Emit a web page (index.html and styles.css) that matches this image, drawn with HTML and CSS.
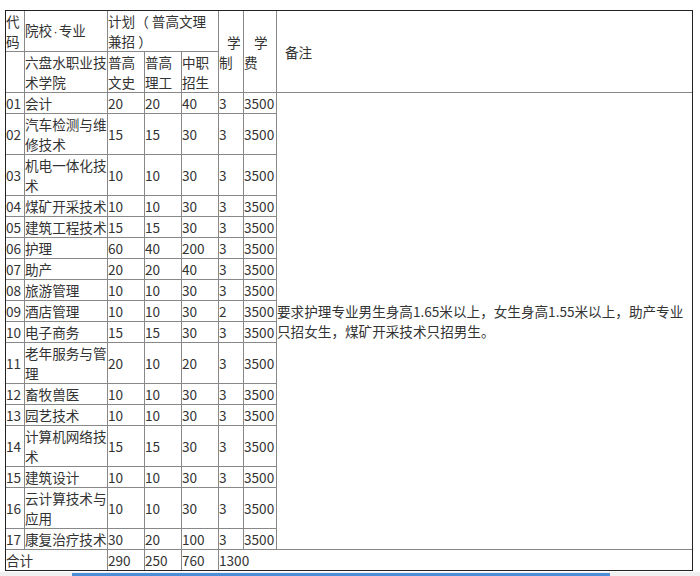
FILE: index.html
```html
<!DOCTYPE html>
<html lang="zh-CN">
<head>
<meta charset="utf-8">
<title>六盘水职业技术学院 招生计划</title>
<link rel="stylesheet" href="styles.css">
</head>
<body>
<div class="page">
<table class="plan">
  <colgroup>
    <col class="c-code"><col class="c-name"><col class="c-num"><col class="c-num"><col class="c-num"><col class="c-year"><col class="c-fee"><col class="c-note">
  </colgroup>
  <tr class="two">
    <td>代码</td>
    <td>院校<span class="dot">·</span>专业</td>
    <td colspan="3">计划（ 普高文理兼招 ）</td>
    <td rowspan="2" class="ind-year">学制</td>
    <td rowspan="2" class="ind-fee">学<br>费</td>
    <td rowspan="2" class="note-head last">备注</td>
  </tr>
  <tr class="two">
    <td></td>
    <td>六盘水职业技术学院</td>
    <td>普高文史</td>
    <td>普高理工</td>
    <td>中职招生</td>
  </tr>
  <tr><td>01</td><td>会计</td><td>20</td><td>20</td><td>40</td><td>3</td><td>3500</td>
    <td rowspan="17" class="note last">要求护理专业男生身高1.65米以上，女生身高1.55米以上，助产专业只招女生，煤矿开采技术只招男生。</td></tr>
  <tr><td>02</td><td>汽车检测与维修技术</td><td>15</td><td>15</td><td>30</td><td>3</td><td>3500</td></tr>
  <tr><td>03</td><td>机电一体化技术</td><td>10</td><td>10</td><td>30</td><td>3</td><td>3500</td></tr>
  <tr><td>04</td><td>煤矿开采技术</td><td>10</td><td>10</td><td>30</td><td>3</td><td>3500</td></tr>
  <tr><td>05</td><td>建筑工程技术</td><td>15</td><td>15</td><td>30</td><td>3</td><td>3500</td></tr>
  <tr><td>06</td><td>护理</td><td>60</td><td>40</td><td>200</td><td>3</td><td>3500</td></tr>
  <tr><td>07</td><td>助产</td><td>20</td><td>20</td><td>40</td><td>3</td><td>3500</td></tr>
  <tr><td>08</td><td>旅游管理</td><td>10</td><td>10</td><td>30</td><td>3</td><td>3500</td></tr>
  <tr><td>09</td><td>酒店管理</td><td>10</td><td>10</td><td>30</td><td>2</td><td>3500</td></tr>
  <tr><td>10</td><td>电子商务</td><td>15</td><td>15</td><td>30</td><td>3</td><td>3500</td></tr>
  <tr><td>11</td><td>老年服务与管理</td><td>20</td><td>10</td><td>20</td><td>3</td><td>3500</td></tr>
  <tr><td>12</td><td>畜牧兽医</td><td>10</td><td>10</td><td>30</td><td>3</td><td>3500</td></tr>
  <tr><td>13</td><td>园艺技术</td><td>10</td><td>10</td><td>30</td><td>3</td><td>3500</td></tr>
  <tr><td>14</td><td>计算机网络技术</td><td>15</td><td>15</td><td>30</td><td>3</td><td>3500</td></tr>
  <tr><td>15</td><td>建筑设计</td><td>10</td><td>10</td><td>30</td><td>3</td><td>3500</td></tr>
  <tr><td>16</td><td>云计算技术与应用</td><td>10</td><td>10</td><td>30</td><td>3</td><td>3500</td></tr>
  <tr><td>17</td><td>康复治疗技术</td><td>30</td><td>20</td><td>100</td><td>3</td><td>3500</td></tr>
  <tr class="total">
    <td colspan="2">合计</td><td>290</td><td>250</td><td>760</td><td colspan="3" class="last">1300</td>
  </tr>
</table>
<div class="strip"><div class="strip-bar"></div></div>
</div>
</body>
</html>
```

FILE: styles.css
```css
html, body {
  margin: 0;
  padding: 0;
  background: #fff;
}

.page {
  padding: 10px 0 0 5px;
}

.plan {
  width: 688px;
  table-layout: fixed;
  border-collapse: separate;
  border-spacing: 0;
  border: 1px solid #222;
  font-family: "Noto Sans CJK SC", "Microsoft YaHei", sans-serif;
  font-size: 13.6px;
  line-height: 20px;
  color: #333;
}

.c-code { width: 19px; }
.c-name { width: 83px; }
.c-num { width: 37px; }
.c-year { width: 25px; }
.c-fee { width: 33px; }
.c-note { width: 415px; }

.plan td {
  padding: 0;
  vertical-align: middle;
  text-align: left;
  border-right: 1px solid #888;
  border-bottom: 1px solid #888;
  overflow: hidden;
  word-break: break-all;
}

.plan td.last {
  border-right: none;
}

.plan tr.total td {
  border-bottom: none;
}

.dot {
  font-family: "Liberation Sans", sans-serif;
  padding: 0 1px;
}

.ind-year {
  text-indent: 8px;
}

.ind-fee {
  text-indent: 10px;
}

.note-head {
  padding-left: 8px !important;
}

.strip {
  margin-top: 1px;
  margin-left: -5px;
  height: 4px;
  background: #f0f0f0;
  display: flex;
}

.strip-bar {
  margin-left: 72px;
  margin-top: 1px;
  width: 538px;
  height: 3px;
  background: #4a8fd8;
}
```
